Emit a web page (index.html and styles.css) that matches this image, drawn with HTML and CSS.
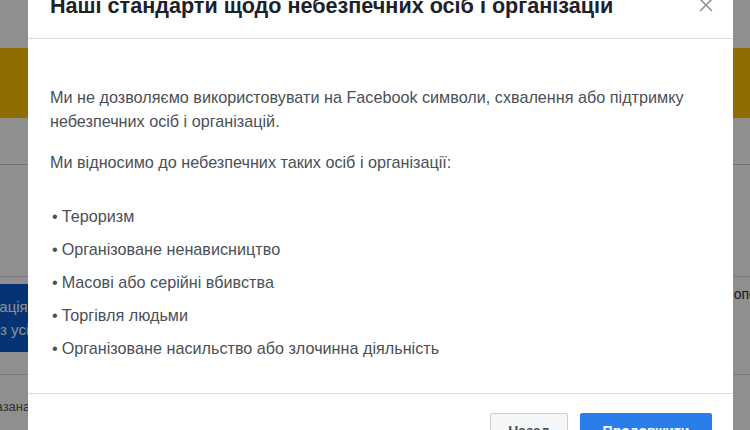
FILE: index.html
```html
<!DOCTYPE html>
<html lang="uk">
<head>
  <meta charset="UTF-8">
  <title>Наші стандарти щодо небезпечних осіб і організацій</title>
  <link rel="stylesheet" href="styles.css">
</head>
<body>
  <div class="page">
    <div class="page-top"></div>
    <div class="banner"></div>
    <div class="row row-short"></div>
    <div class="row row-tall"></div>
    <div class="card-row">
      <div class="blue-card">
        <span class="card-line1">Публікація</span>
        <span class="card-line2">з усіх джерел</span>
      </div>
      <div class="card-side">Допомога</div>
    </div>
    <div class="row-bottom">
      <span>Показана</span>
    </div>
  </div>

  <div class="overlay"></div>

  <div class="modal">
    <div class="modal-header">
      <h2>Наші стандарти щодо небезпечних осіб і організацій</h2>
      <svg class="close" width="14" height="14" viewBox="0 0 14 14">
        <path d="M1 1 L13 13 M13 1 L1 13" stroke="#90949c" stroke-width="1.6" fill="none"/>
      </svg>
    </div>
    <div class="modal-body">
      <p>Ми не дозволяємо використовувати на Facebook символи, схвалення або підтримку небезпечних осіб і організацій.</p>
      <p>Ми відносимо до небезпечних таких осіб і організації:</p>
      <ul>
        <li>Тероризм</li>
        <li>Організоване ненависництво</li>
        <li>Масові або серійні вбивства</li>
        <li>Торгівля людьми</li>
        <li>Організоване насильство або злочинна діяльність</li>
      </ul>
    </div>
    <div class="modal-footer">
      <button class="btn btn-grey">Назад</button>
      <button class="btn btn-blue">Продовжити</button>
    </div>
  </div>
</body>
</html>
```

FILE: styles.css
```css
body {
  margin: 0;
  width: 750px;
  height: 430px;
  overflow: hidden;
  position: relative;
  font-family: "Liberation Sans", Arial, sans-serif;
  background: #fff;
}

/* page under the dialog */
.page {
  height: 430px;
  overflow: hidden;
  background: #fff;
}

.page-top {
  height: 48px;
}

.banner {
  height: 70px;
  background: #ffc200;
}

.row-short {
  height: 46px;
  border-bottom: 1px solid #c8c8c8;
}

.row-tall {
  height: 111px;
  border-bottom: 1px solid #d8d8d8;
}

.card-row {
  display: flex;
  justify-content: space-between;
  margin-top: 7px;
  height: 90px;
  border-bottom: 1px solid #d8d8d8;
}

.blue-card {
  width: 120px;
  height: 68px;
  margin-left: -46px;
  background: #0c5ccf;
  color: #fff;
  font-size: 15px;
  display: flex;
  flex-direction: column;
  justify-content: center;
  gap: 6px;
  white-space: nowrap;
}

.card-line2 {
  padding-left: 46px;
}

.card-side {
  font-size: 14px;
  color: #333;
  margin-top: 2px;
  margin-right: -50px;
  width: 66px;
  overflow: hidden;
  white-space: nowrap;
  text-indent: -10px;
}

.row-bottom {
  font-size: 13px;
  color: #555;
  padding-top: 24px;
  margin-left: -27px;
}

.overlay {
  position: absolute;
  inset: 0;
  background: rgba(0, 0, 0, 0.44);
}

/* dialog */
.modal {
  position: absolute;
  left: 28px;
  top: -20px;
  width: 705px;
  height: 470px;
  background: #fff;
  color: #4b4f56;
}

.modal-header {
  display: flex;
  justify-content: space-between;
  align-items: flex-start;
  padding: 14px 21px 20px 22px;
  border-bottom: 1px solid #dadde1;
}

.modal-header h2 {
  margin: 0;
  font-size: 21.6px;
  line-height: 24px;
  font-weight: bold;
  color: #1d2129;
}

.close {
  margin-top: 4px;
  margin-right: -1px;
}

.modal-body {
  padding: 46px 22px 24px 22px;
  font-size: 16.2px;
  line-height: 24px;
}

.modal-body p {
  margin: 0 0 17px;
}

.modal-body ul {
  list-style: none;
  margin: 30px 0 0;
  padding: 0;
}

.modal-body li {
  margin-bottom: 9px;
}

.modal-body li::before {
  content: "•";
  margin-right: 4px;
  margin-left: 2px;
}

.modal-footer {
  display: flex;
  justify-content: flex-end;
  gap: 12px;
  padding: 19px 21px;
  border-top: 1px solid #dadde1;
}

.btn {
  height: 36px;
  padding: 0 16px;
  border-radius: 2px;
  font-family: "Liberation Sans", Arial, sans-serif;
  font-size: 14px;
  font-weight: bold;
}

.btn-grey {
  width: 78px;
  background: #f5f6f7;
  border: 1px solid #ccd0d5;
  color: #4b4f56;
}

.btn-blue {
  width: 132px;
  background: #2b7de9;
  border: 1px solid #2b7de9;
  color: #fff;
}
```
